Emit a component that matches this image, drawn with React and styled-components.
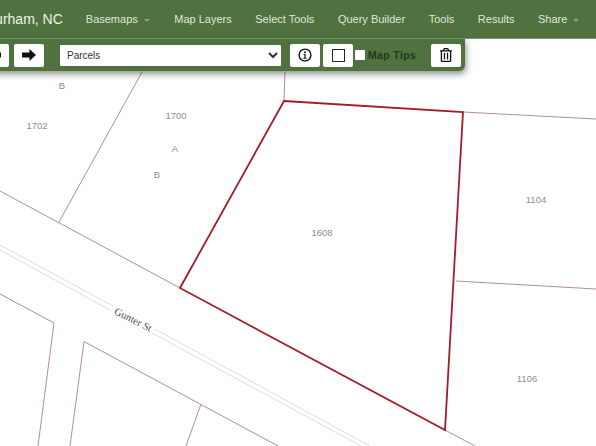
import React from 'react';
import styled, { createGlobalStyle } from 'styled-components';
import { FaRegTrashAlt } from 'react-icons/fa';

const GlobalStyle = createGlobalStyle`
  html, body {
    margin: 0;
    padding: 0;
    background: #fff;
    font-family: "Liberation Sans", Arial, sans-serif;
  }
`;

const Page = styled.div`
  position: relative;
  width: 596px;
  height: 446px;
  overflow: hidden;
  display: flex;
  flex-direction: column;
`;

const Navbar = styled.nav`
  flex: none;
  height: 38px;
  display: flex;
  align-items: center;
  background: #4f7240;
  border-bottom: 1px solid #7a9a6c;
  color: #dfe8da;
  font-size: 11px;
  white-space: nowrap;
`;

const Brand = styled.span`
  font-size: 14px;
  color: #eef3ea;
  margin-left: -15px;
  margin-right: 23px;
`;

const NavItem = styled.span`
  display: flex;
  align-items: center;
  margin-right: 23.5px;
`;

const Caret = styled.i`
  width: 0;
  height: 0;
  margin-left: 6px;
  margin-right: 1px;
  margin-top: 2px;
  border-left: 3.5px solid transparent;
  border-right: 3.5px solid transparent;
  border-top: 3.5px solid #8ba67e;
`;

const Toolbar = styled.div`
  position: absolute;
  top: 39px;
  left: -26px;
  height: 32px;
  display: flex;
  align-items: center;
  padding: 0 4px 0 5px;
  background: #4f7240;
  border-bottom-right-radius: 6px;
  box-shadow: 1px 3px 6px rgba(30, 40, 25, 0.5);
`;

const ToolButton = styled.button`
  flex: none;
  width: 30px;
  height: 23px;
  margin-left: ${(p) => p.$gap || 0}px;
  padding: 0;
  display: flex;
  align-items: center;
  justify-content: center;
  background: #fff;
  border: none;
  border-radius: 2px;
  color: #111;
  font-size: 14px;
`;

const LayerSelect = styled.select`
  flex: none;
  width: 221px;
  height: 21px;
  margin-left: 16px;
  padding: 0 3px;
  background: #fff;
  border: none;
  border-radius: 1px;
  color: #333;
  font-family: "Liberation Sans", Arial, sans-serif;
  font-size: 10px;
`;

const EmptyBox = styled.span`
  display: block;
  width: 11px;
  height: 11px;
  border: 1px solid #222;
`;

const TipsLabel = styled.label`
  display: flex;
  align-items: center;
  margin-left: 2px;
  margin-right: 15px;
  color: #1f3a1a;
  font-size: 10.5px;
  font-weight: bold;
  letter-spacing: 0.35px;
`;

const TipsCheck = styled.input`
  appearance: none;
  width: 10px;
  height: 10px;
  margin: 0 3px 0 0;
  background: #fff;
  border-radius: 1px;
`;

const MapArea = styled.svg`
  flex: 1;
  display: block;
  width: 596px;
  background: #fff;
`;

const ParcelLine = styled.path`
  fill: none;
  stroke: #b39090;
  stroke-width: 1;
`;

const RoadLine = styled.path`
  fill: none;
  stroke: #dedede;
  stroke-width: 1;
`;

const SelectedParcel = styled.path`
  fill: none;
  stroke: #a51c2c;
  stroke-width: 1.8;
  stroke-linejoin: miter;
`;

const ParcelLabel = styled.text`
  fill: #8c8c8c;
  font-family: "Liberation Sans", Arial, sans-serif;
  font-size: 9.5px;
  text-anchor: middle;
  opacity: 0.99;
`;

const StreetLabel = styled.text`
  fill: #4a4a4a;
  font-family: "Liberation Serif", serif;
  font-size: 10.5px;
  text-anchor: middle;
  opacity: 0.99;
`;

const ArrowIcon = ({ flip }) => (
  <svg width="14" height="12" viewBox="0 0 14 12" style={flip ? { transform: 'scaleX(-1)' } : undefined}>
    <path d="M0 3.6h7.4V0L14 6l-6.6 6V8.4H0z" fill="#111" />
  </svg>
);

const InfoIcon = () => (
  <svg width="14" height="14" viewBox="0 0 14 14">
    <circle cx="7" cy="7" r="5.9" fill="none" stroke="#111" strokeWidth="1.4" />
    <circle cx="7" cy="4.2" r="1" fill="#111" />
    <path d="M5.6 6h2v3.7h1v1h-3.2v-1h1V7h-.8z" fill="#111" />
  </svg>
);

const parcels = [
  { id: 'b1', text: 'B', x: 62, y: 89 },
  { id: '1702', text: '1702', x: 37, y: 129 },
  { id: '1700', text: '1700', x: 176, y: 119 },
  { id: 'a', text: 'A', x: 175, y: 152 },
  { id: 'b2', text: 'B', x: 157, y: 178 },
  { id: '1608', text: '1608', x: 322, y: 236 },
  { id: '1104', text: '1104', x: 536, y: 203 },
  { id: '1106', text: '1106', x: 527, y: 382 },
];

const lines = [
  'M142 72L59 222',
  'M0 191L180 288',
  'M285 72L284 101',
  'M463 112L596 119',
  'M456 281L596 289',
  'M445 430L475 446',
  'M0 294L54 323L38 446',
  'M70 446L84 341.5L278 446',
  'M201 404L186 446',
];

const roads = [
  'M0 245L113 306',
  'M155 329L370 446',
  'M0 250L110 310',
  'M152 333L361 446',
];

const App = () => (
  <Page>
    <GlobalStyle />
    <Navbar>
      <Brand>Durham, NC</Brand>
      <NavItem>Basemaps<Caret /></NavItem>
      <NavItem>Map Layers</NavItem>
      <NavItem>Select Tools</NavItem>
      <NavItem>Query Builder</NavItem>
      <NavItem>Tools</NavItem>
      <NavItem>Results</NavItem>
      <NavItem>Share<Caret /></NavItem>
    </Navbar>
    <MapArea viewBox="0 39 596 407">
      {roads.map((d) => <RoadLine key={d} d={d} />)}
      {lines.map((d) => <ParcelLine key={d} d={d} />)}
      <SelectedParcel d="M284 101L463 112L445 430L180 288Z" />
      {parcels.map((p) => (
        <ParcelLabel key={p.id} x={p.x} y={p.y}>{p.text}</ParcelLabel>
      ))}
      <StreetLabel x="133" y="323" transform="rotate(27 133 320)">Gunter St</StreetLabel>
    </MapArea>
    <Toolbar>
      <ToolButton><ArrowIcon flip /></ToolButton>
      <ToolButton $gap={5}><ArrowIcon /></ToolButton>
      <LayerSelect defaultValue="Parcels">
        <option>Parcels</option>
      </LayerSelect>
      <ToolButton $gap={9}><InfoIcon /></ToolButton>
      <ToolButton $gap={3}><EmptyBox /></ToolButton>
      <TipsLabel><TipsCheck type="checkbox" />Map Tips</TipsLabel>
      <ToolButton><FaRegTrashAlt /></ToolButton>
    </Toolbar>
  </Page>
);

export default App;
